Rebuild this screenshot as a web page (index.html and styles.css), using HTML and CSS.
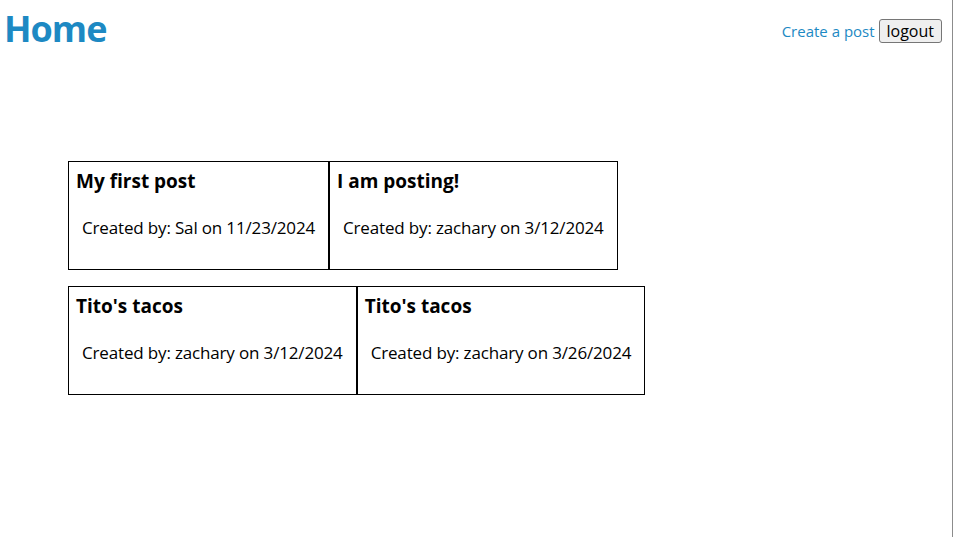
FILE: index.html
```html
<!DOCTYPE html>
<html lang="en">
<head>
<meta charset="utf-8">
<title>Home</title>
<link rel="stylesheet" href="styles.css">
</head>
<body>
<div class="page">
  <header class="header">
    <h1 class="title">Home</h1>
    <nav class="nav">
      <a class="nav-link" href="#">Create a post</a>
      <button class="btn" type="button">logout</button>
    </nav>
  </header>
  <main class="posts">
    <div class="post-row">
      <div class="post">
        <h3 class="post-title">My first post</h3>
        <p class="post-meta">Created by: Sal on 11/23/2024</p>
      </div>
      <div class="post">
        <h3 class="post-title">I am posting!</h3>
        <p class="post-meta">Created by: zachary on 3/12/2024</p>
      </div>
    </div>
    <div class="post-row">
      <div class="post">
        <h3 class="post-title">Tito's tacos</h3>
        <p class="post-meta">Created by: zachary on 3/12/2024</p>
      </div>
      <div class="post">
        <h3 class="post-title">Tito's tacos</h3>
        <p class="post-meta">Created by: zachary on 3/26/2024</p>
      </div>
    </div>
  </main>
</div>
</body>
</html>
```
FILE: styles.css
```css
html, body {
  margin: 0;
  padding: 0;
  height: 100%;
  background: #ffffff;
}
body {
  font-family: "Open Sans", "Noto Sans", sans-serif;
  color: #000;
}
.page {
  box-sizing: border-box;
  min-height: 100%;
  border-right: 1px solid #8c8c8c;
}
.header {
  display: flex;
  justify-content: space-between;
  align-items: flex-start;
  padding: 0 10px 0 4px;
}
.title {
  margin: 4px 0 0;
  font-size: 36px;
  line-height: 50px;
  font-weight: 700;
  color: #1d89c3;
  letter-spacing: -1px;
}
.nav {
  margin-top: 19px;
  font-size: 15px;
  line-height: 24px;
}
.nav-link {
  color: #1d89c3;
  text-decoration: none;
}
.btn {
  font-family: inherit;
  font-size: 16px;
  line-height: 20px;
  padding: 1px 7px;
  border: 1px solid #767676;
  border-radius: 3px;
  background: #efefef;
  color: #000;
}
.posts {
  padding: 107px 0 0 68px;
  display: flex;
  flex-direction: column;
  gap: 16px;
}
.post-row {
  display: flex;
}
.post {
  border: 1px solid #000;
  padding: 0 7px;
}
.post-title {
  margin: 7px 0 0;
  font-size: 19px;
  line-height: 24px;
  font-weight: 700;
}
.post-meta {
  margin: 23px 0 29px;
  padding: 0 6px;
  font-size: 17px;
  line-height: 24px;
  letter-spacing: -0.16px;
}
```
